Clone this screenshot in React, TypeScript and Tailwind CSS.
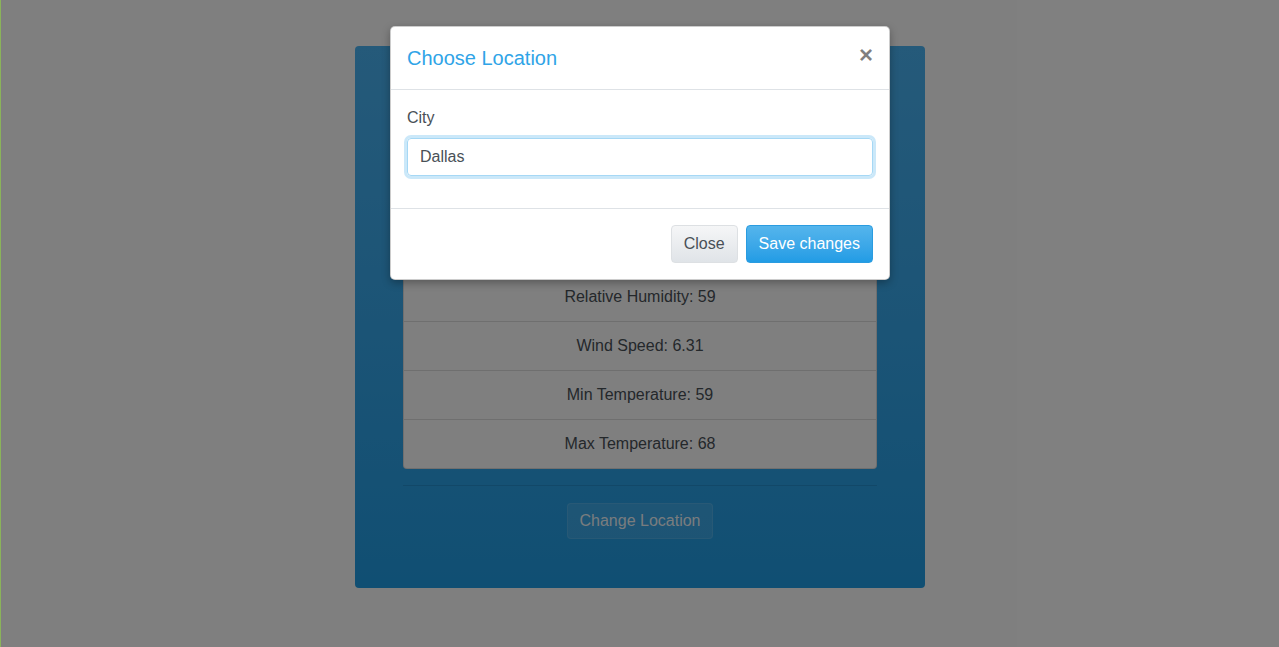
import React from "react";

const rows = [
  "Current Weather: Clouds",
  "Temperature: 63",
  "Relative Humidity: 59",
  "Wind Speed: 6.31",
  "Min Temperature: 59",
  "Max Temperature: 68",
];

export default function App() {
  return (
    <div
      className="relative h-[647px] overflow-hidden bg-white text-[16px] leading-normal text-[#495057]"
      style={{ fontFamily: '"Liberation Sans", Arial, sans-serif' }}
    >
      {/* page */}
      <div className="flex pl-px pt-[46px]">
        <div className="mx-auto flex w-[570px] flex-col rounded bg-gradient-to-b from-[#4ab4f4] to-[#209ee6] px-12 pb-[49px] pt-6">
          <div className="mb-6 flex h-20 flex-col items-center justify-center text-white">
            <h1 className="text-[40px] leading-tight">Dallas</h1>
          </div>
          <ul className="rounded border border-[rgba(0,0,0,0.125)] bg-white divide-y divide-[rgba(0,0,0,0.125)]">
            {rows.map((r) => (
              <li key={r} className="py-3 text-center leading-6">
                {r}
              </li>
            ))}
          </ul>
          <hr className="mb-[17px] mt-4 border-t border-[rgba(0,0,0,0.1)]" />
          <div className="flex justify-center">
            <button className="h-9 rounded border border-white/10 bg-white/10 px-3 text-white/95">
              Change Location
            </button>
          </div>
        </div>
      </div>

      {/* backdrop */}
      <div className="absolute inset-0 bg-black/50" />
      <div className="absolute bottom-0 left-0 top-0 w-px bg-[#8ab35a]" />

      {/* modal */}
      <div className="absolute left-[390px] top-[26px] w-[500px] rounded-[5px] border border-black/20 bg-white shadow-[0_3px_9px_rgba(0,0,0,0.3)]">
        <div className="flex items-start justify-between border-b border-[#dee2e6] p-4">
          <h5 className="text-[20px] leading-[30px] text-[#2fa4e7]">Choose Location</h5>
          <button className="mt-[-2px] text-[24px] font-bold leading-[28px] text-black/50 [text-shadow:0_1px_0_#fff]">
            ×
          </button>
        </div>
        <div className="p-4">
          <div className="mb-4">
            <label className="mb-2 block">City</label>
            <div className="h-[38px] w-full rounded border border-[#a6d8f5] px-3 leading-[36px] shadow-[0_0_0_3px_rgba(47,164,231,0.25)]">
              Dallas
            </div>
          </div>
        </div>
        <div className="flex justify-end gap-2 border-t border-[#dee2e6] px-4 py-4">
          <button className="h-[38px] rounded border border-[#dde0e3] bg-gradient-to-b from-[#f5f6f7] to-[#e0e4e8] px-3 text-[#495057]">
            Close
          </button>
          <button className="h-[38px] rounded border border-[#2a9ce0] bg-gradient-to-b from-[#54b5ec] to-[#219ce5] px-3 text-white">
            Save changes
          </button>
        </div>
      </div>
    </div>
  );
}
